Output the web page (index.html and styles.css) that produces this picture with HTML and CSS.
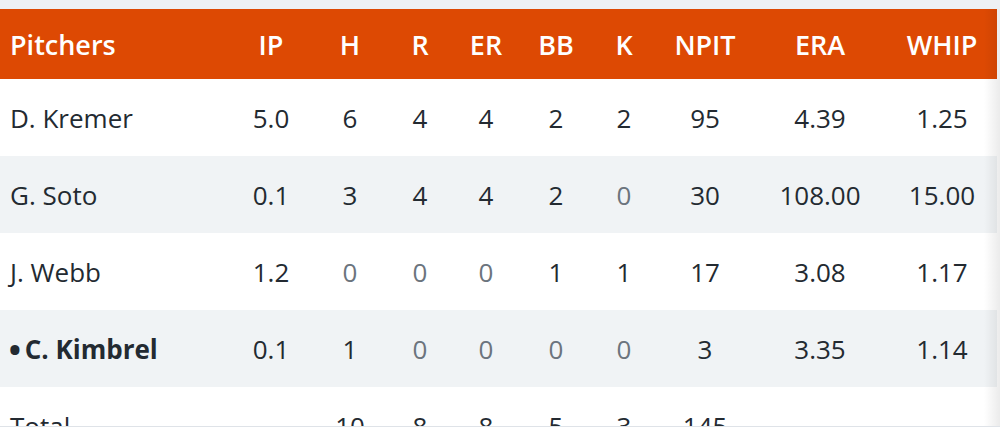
FILE: index.html
```html
<!DOCTYPE html>
<html lang="en">
<head>
<meta charset="utf-8">
<title>Pitchers</title>
<link rel="stylesheet" href="styles.css">
</head>
<body>
<div class="top-strip"></div>
<div class="box">
  <table class="stats">
    <colgroup>
      <col class="c-name"><col class="c-ip"><col class="c-h"><col class="c-r"><col class="c-er"><col class="c-bb"><col class="c-k"><col class="c-npit"><col class="c-era"><col class="c-whip">
    </colgroup>
    <thead>
      <tr><th class="name">Pitchers</th><th>IP</th><th>H</th><th>R</th><th>ER</th><th>BB</th><th>K</th><th>NPIT</th><th>ERA</th><th>WHIP</th></tr>
    </thead>
    <tbody>
      <tr><td class="name">D. Kremer</td><td>5.0</td><td>6</td><td>4</td><td>4</td><td>2</td><td>2</td><td>95</td><td>4.39</td><td>1.25</td></tr>
      <tr class="alt"><td class="name">G. Soto</td><td>0.1</td><td>3</td><td>4</td><td>4</td><td>2</td><td class="zero">0</td><td>30</td><td>108.00</td><td>15.00</td></tr>
      <tr><td class="name">J. Webb</td><td>1.2</td><td class="zero">0</td><td class="zero">0</td><td class="zero">0</td><td>1</td><td>1</td><td>17</td><td>3.08</td><td>1.17</td></tr>
      <tr class="alt"><td class="name current"><span class="dot">•</span>C. Kimbrel</td><td>0.1</td><td>1</td><td class="zero">0</td><td class="zero">0</td><td class="zero">0</td><td class="zero">0</td><td>3</td><td>3.35</td><td>1.14</td></tr>
      <tr><td class="name">Total</td><td class="dash">-</td><td>10</td><td>8</td><td>8</td><td>5</td><td>3</td><td>145</td><td class="dash">-</td><td class="dash">-</td></tr>
    </tbody>
  </table>
  <div class="edge-shadow"></div>
</div>
</body>
</html>
```
FILE: styles.css
```css
html, body {
  margin: 0;
  padding: 0;
  background: #ffffff;
}
body {
  font-family: "Open Sans", "Noto Sans", sans-serif;
  color: #232a31;
  width: 1000px;
  height: 431px;
  overflow: hidden;
}
.top-strip {
  height: 9px;
  background: #eef1f4;
}
.box {
  position: relative;
  height: 417px;
  overflow: hidden;
  border-bottom: 1px solid #dfe3e8;
}
.stats {
  width: 997px;
  table-layout: fixed;
  border-collapse: collapse;
  font-size: 26px;
}
.c-name { width: 231px; }
.c-ip { width: 80px; }
.c-h { width: 78px; }
.c-r { width: 62px; }
.c-er { width: 70px; }
.c-bb { width: 70px; }
.c-k { width: 66px; }
.c-npit { width: 96px; }
.c-era { width: 134px; }
.c-whip { width: 110px; }
.stats th, .stats td {
  padding: 0;
  text-align: center;
  white-space: nowrap;
}
.stats thead tr {
  background: #dd4903;
}
.stats th {
  height: 70px;
  color: #ffffff;
  font-weight: 600;
  font-size: 27px;
}
.stats td {
  height: 77px;
  font-weight: 400;
}
.stats tr.alt {
  background: #f0f3f5;
}
.stats .name {
  text-align: left;
  padding-left: 10px;
}
.stats .current {
  font-weight: 700;
}
.dot {
  display: inline-block;
  margin-right: 5px;
  font-weight: 700;
  transform: scale(1.25);
}
.zero {
  color: #6b747d;
}
.dash {
  color: #9aa2aa;
}
.edge-shadow {
  position: absolute;
  top: 0;
  right: 0;
  width: 16px;
  height: 100%;
  background: linear-gradient(to right, rgba(0, 0, 0, 0), rgba(0, 0, 0, 0.08));
  pointer-events: none;
}
```
